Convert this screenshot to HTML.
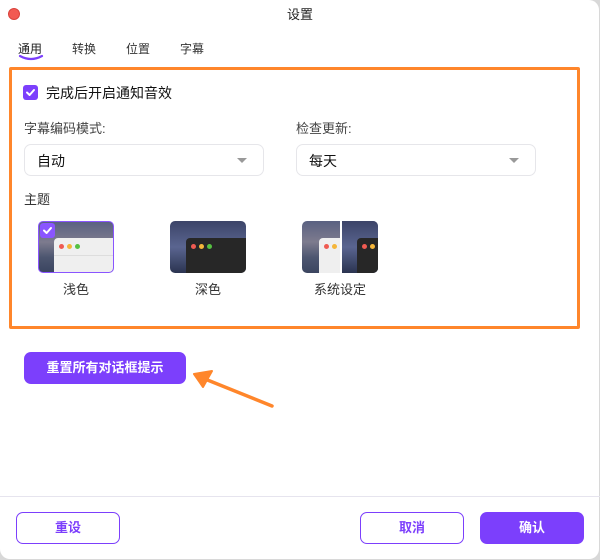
<!DOCTYPE html>
<html><head><meta charset="utf-8"><style>
*{margin:0;padding:0;box-sizing:border-box}
body{width:600px;height:560px;background:#d8d8d8;font-family:"Liberation Sans","Noto Sans CJK SC",sans-serif;position:relative;overflow:hidden}
.win{position:absolute;left:0;top:0;width:599px;height:559px;background:#fff;border-radius:0 10px 10px 10px}
.a{position:absolute}
.t{font-size:12px;color:#333}
.sel{position:absolute;top:144px;width:240px;height:32px;border:1px solid #e6e6ea;border-radius:7px;font-size:14px;color:#111;padding:6px 0 0 12px}
.sel:after{content:"";position:absolute;right:16px;top:13px;border-left:5px solid transparent;border-right:5px solid transparent;border-top:5px solid #999}
.th{position:absolute;top:221px;width:76px;height:52px;border-radius:5px;overflow:hidden;background:linear-gradient(180deg,#5a6181 0%,#7d7b8e 40%,#4d5670 70%,#3b4560 100%)}
.dots{position:absolute;top:6px;left:5px;display:flex;gap:3px}
.dots i{width:5px;height:5px;border-radius:50%;display:block}
.lbl{position:absolute;top:279px;font-size:13px;color:#333;text-align:center;width:76px}
.btn{position:absolute;top:512px;height:32px;width:104px;border-radius:7px;font-size:13px;font-weight:bold;text-align:center;line-height:30px}
.o{border:1.5px solid #7c3ffc;color:#7c3ffc;background:#fff}
</style></head><body><div class="win">
<div class="a" style="left:8px;top:8px;width:12px;height:12px;border-radius:50%;background:#f25a52;border:.5px solid #d9433c"></div>
<div class="a" style="left:0;width:600px;top:4px;text-align:center;font-size:13px;color:#222">设置</div>
<div class="a t" style="left:18px;top:40px;color:#222">通用</div>
<div class="a t" style="left:72px;top:40px">转换</div>
<div class="a t" style="left:126px;top:40px">位置</div>
<div class="a t" style="left:180px;top:40px">字幕</div>
<svg class="a" style="left:18px;top:54px" width="26" height="8"><path d="M2 2 Q13 8 24 2" stroke="#7c3ffc" stroke-width="2.2" fill="none" stroke-linecap="round"/></svg>
<div class="a" style="left:9px;top:67px;width:571px;height:262px;border:3.5px solid #ff862b;border-radius:2px"></div>
<div class="a" style="left:23px;top:85px;width:15px;height:15px;border-radius:3px;background:#7c3ffc"></div>
<svg class="a" style="left:23px;top:85px" width="15" height="15"><path d="M4 7.5 L6.6 10 L11 5" stroke="#fff" stroke-width="2" fill="none" stroke-linecap="round" stroke-linejoin="round"/></svg>
<div class="a" style="left:46px;top:83px;font-size:14px;color:#111">完成后开启通知音效</div>
<div class="a" style="left:24px;top:118px;font-size:13px;color:#444">字幕编码模式:</div>
<div class="a" style="left:296px;top:118px;font-size:13px;color:#444">检查更新:</div>
<div class="sel" style="left:24px">自动</div>
<div class="sel" style="left:296px">每天</div>
<div class="a" style="left:24px;top:189px;font-size:13px;color:#333">主题</div>
<div class="th" style="left:38px;border:1.5px solid #8a55ff">
 <div class="a" style="left:15px;top:16px;width:62px;height:40px;background:#efefef;border-radius:4px 0 0 0"><div class="dots"><i style="background:#ef5b52"></i><i style="background:#f5b63a"></i><i style="background:#56c142"></i></div><div class="a" style="left:0;top:17px;width:62px;height:1px;background:#ddd"></div></div>
 <div class="a" style="left:1px;top:1px;width:15px;height:15px;border-radius:3px;background:#8a55ff"></div>
 <svg class="a" style="left:1px;top:1px" width="15" height="15"><path d="M4 7.5 L6.6 10 L11 5" stroke="#fff" stroke-width="2" fill="none" stroke-linecap="round" stroke-linejoin="round"/></svg>
</div>
<div class="th" style="left:170px;background:linear-gradient(180deg,#3c4468,#5a6590 50%,#2b3450)">
 <div class="a" style="left:16px;top:17px;width:62px;height:40px;background:#272727;border-radius:4px 0 0 0"><div class="dots"><i style="background:#ef5b52"></i><i style="background:#f5b63a"></i><i style="background:#56c142"></i></div></div>
</div>
<div class="th" style="left:302px">
 <div class="a" style="left:38px;top:0;width:38px;height:52px;background:linear-gradient(180deg,#3c4468,#5a6590 50%,#2b3450)"></div>
 <div class="a" style="left:17px;top:17px;width:21px;height:40px;background:#efefef;border-radius:4px 0 0 0"><div class="dots"><i style="background:#ef5b52"></i><i style="background:#f5b63a"></i></div></div>
 <div class="a" style="left:38px;top:0;width:2px;height:52px;background:#fff"></div>
 <div class="a" style="left:55px;top:17px;width:22px;height:40px;background:#272727;border-radius:4px 0 0 0"><div class="dots"><i style="background:#ef5b52"></i><i style="background:#f5b63a"></i></div></div>
</div>
<div class="lbl" style="left:38px">浅色</div>
<div class="lbl" style="left:170px">深色</div>
<div class="lbl" style="left:302px">系统设定</div>
<div class="a" style="left:24px;top:352px;width:162px;height:32px;border-radius:7px;background:#7c3ffc;color:#fff;font-size:13px;font-weight:bold;text-align:center;line-height:32px">重置所有对话框提示</div>
<svg class="a" style="left:190px;top:368px" width="90" height="45"><path d="M82 38 L10 9" stroke="#ff862b" stroke-width="3.5" stroke-linecap="round"/><path d="M4 6 L22 3 L13 19 Z" fill="#ff862b" stroke="#ff862b" stroke-width="2" stroke-linejoin="round"/></svg>
<div class="a" style="left:0;top:496px;width:600px;height:1px;background:#e6e4ee"></div>
<div class="btn o" style="left:16px">重设</div>
<div class="btn o" style="left:360px">取消</div>
<div class="btn" style="left:480px;background:#7c3ffc;color:#fff;line-height:32px">确认</div>
</div></body></html>
